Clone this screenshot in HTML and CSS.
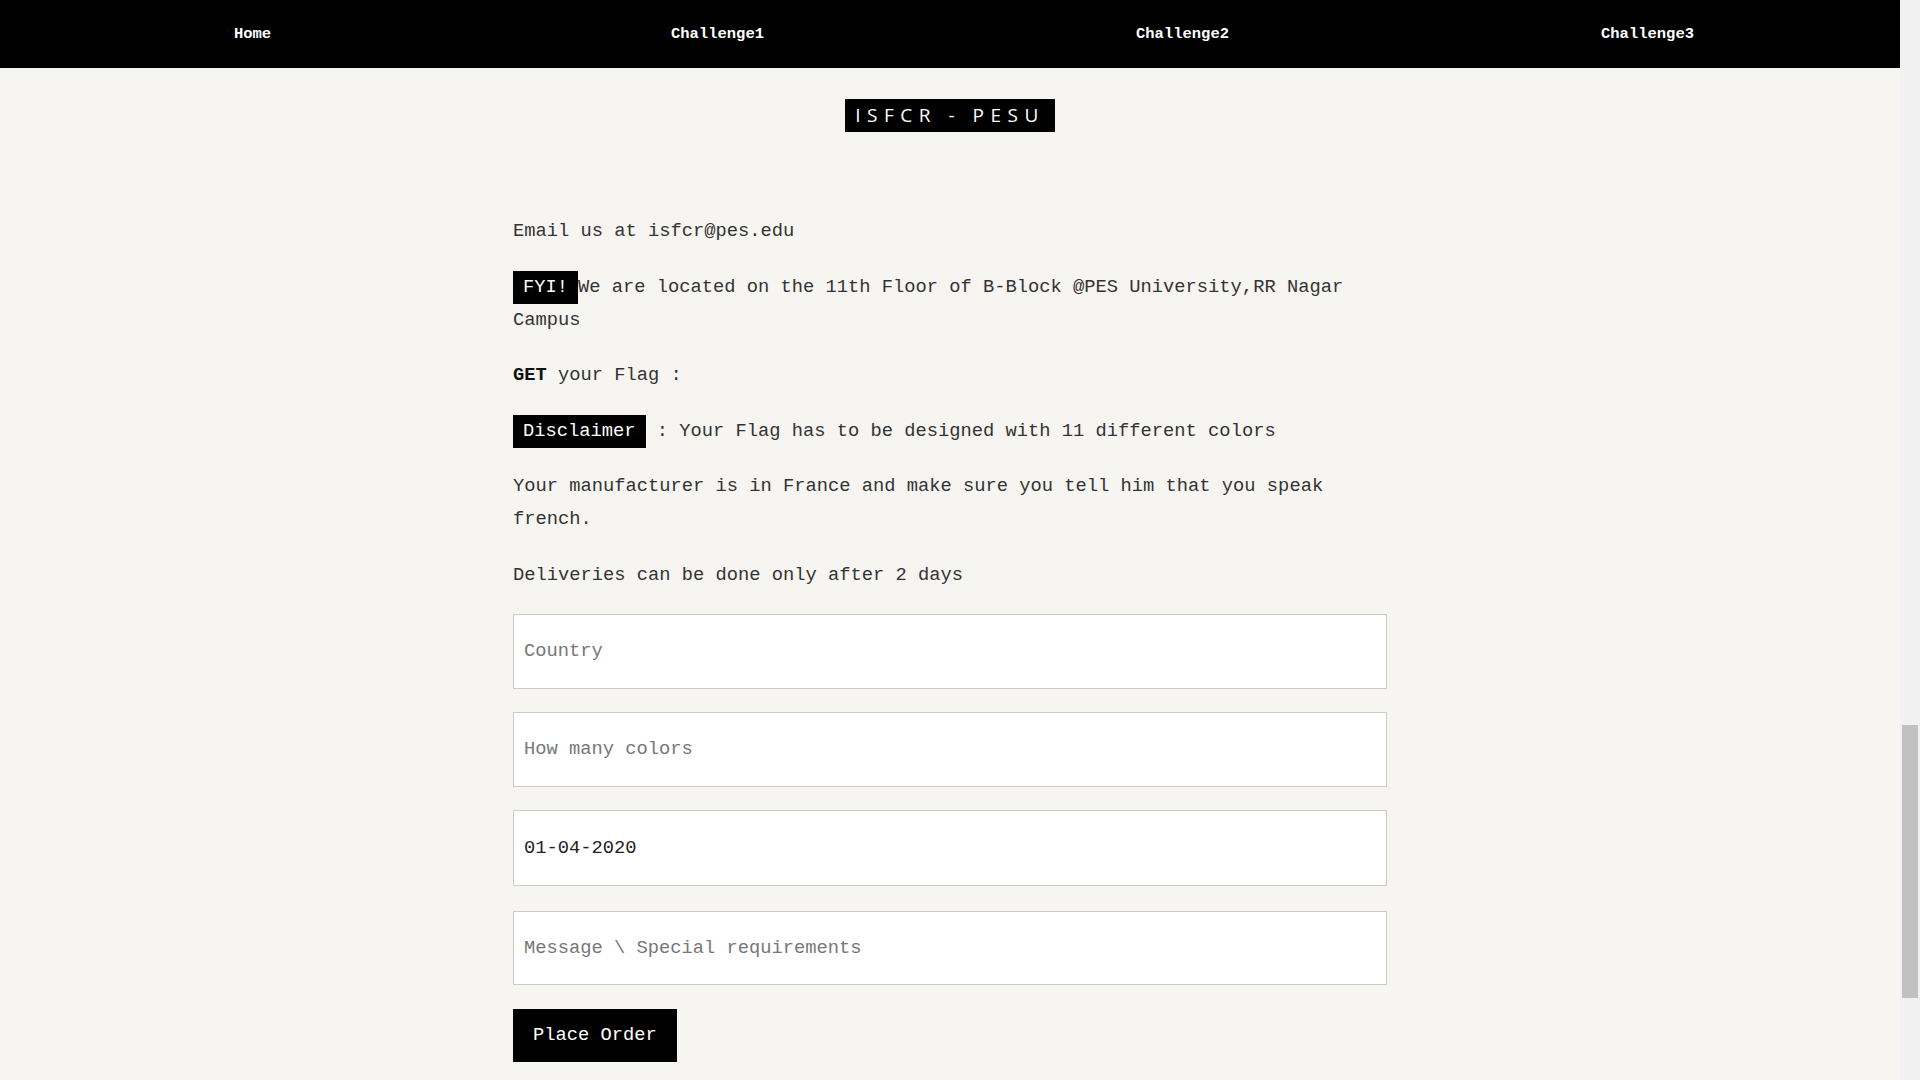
FILE: index.html
```html
<!DOCTYPE html>
<html lang="en">
<head>
<meta charset="utf-8">
<title>ISFCR - PESU</title>
<link rel="stylesheet" href="styles.css">
</head>
<body>
<nav class="nav">
  <a class="nav-item" href="#">Home</a>
  <a class="nav-item" href="#">Challenge1</a>
  <a class="nav-item" href="#">Challenge2</a>
  <a class="nav-item" href="#">Challenge3</a>
</nav>
<main class="container">
  <h1 class="title-wrap"><span class="title">ISFCR - PESU</span></h1>
  <section class="info">
    <p>Email us at isfcr@pes.edu</p>
    <p><span class="tag">FYI!</span>We are located on the 11th Floor of B-Block @PES University,RR Nagar Campus</p>
    <p><strong class="strong">GET</strong> your Flag :</p>
    <p><span class="tag">Disclaimer</span> : Your Flag has to be designed with 11 different colors</p>
    <p>Your manufacturer is in France and make sure you tell him that you speak french.</p>
    <p class="last">Deliveries can be done only after 2 days</p>
  </section>
  <form class="order">
    <input class="field" type="text" placeholder="Country">
    <input class="field" type="text" placeholder="How many colors">
    <input class="field field-date" type="text" value="01-04-2020">
    <input class="field field-msg" type="text" placeholder="Message \ Special requirements">
    <button class="btn" type="button">Place Order</button>
  </form>
</main>
</body>
</html>
```

FILE: styles.css
```css
html {
  height: 100%;
  background:
    linear-gradient(#c1c1c1, #c1c1c1) right 2px top 725px / 16px 273px no-repeat,
    #f1f1f1;
}
body {
  box-sizing: border-box;
  min-height: 100%;
  margin: 0 20px 0 0;
  background: #f6f5f1;
  color: #333;
  font-family: "Liberation Mono", "DejaVu Sans Mono", monospace;
  font-size: 18.75px;
  line-height: 33px;
  overflow: hidden;
}
.nav {
  display: flex;
  height: 68px;
  padding: 0 20px;
  background: #000;
  align-items: center;
}
.nav-item {
  flex: 1;
  padding-top: 1px;
  text-align: center;
  color: #fff;
  text-decoration: none;
  font-family: "Liberation Mono", "DejaVu Sans Mono", monospace;
  font-weight: bold;
  font-size: 15.5px;
}
.container {
  width: 874px;
  margin: 0 auto;
}
.title-wrap {
  margin: 31px 0 81px;
  text-align: center;
  font-size: inherit;
  line-height: 33px;
  font-weight: normal;
}
.title {
  display: inline-block;
  height: 33px;
  padding: 0 10px;
  background: #000;
  color: #fff;
  font-family: "Open Sans", "Liberation Sans", sans-serif;
  font-size: 19px;
  letter-spacing: 6.5px;
}
.info p {
  margin: 0 0 22.5px;
}
.info p.last {
  margin-bottom: 22px;
}
.tag {
  display: inline-block;
  padding: 0 10px;
  background: #000;
  color: #fff;
  line-height: 33px;
}
.strong {
  color: #111;
  font-weight: bold;
}
.order {
  display: flex;
  flex-direction: column;
  align-items: flex-start;
}
.field {
  box-sizing: border-box;
  width: 100%;
  height: 75px;
  margin: 0 0 23px;
  padding: 0 10px;
  border: 1px solid #cbcbcb;
  background: #fff;
  color: #222;
  font-family: "Liberation Mono", "DejaVu Sans Mono", monospace;
  font-size: 18.75px;
  outline: none;
}
.field-date {
  height: 76px;
  margin-bottom: 25px;
}
.field-msg {
  height: 74px;
  margin-bottom: 24px;
}
.field::placeholder {
  color: #777;
}
.btn {
  height: 53px;
  padding: 0 20px;
  border: none;
  background: #000;
  color: #fff;
  font-family: "Liberation Mono", "DejaVu Sans Mono", monospace;
  font-size: 18.75px;
  cursor: pointer;
}
```
